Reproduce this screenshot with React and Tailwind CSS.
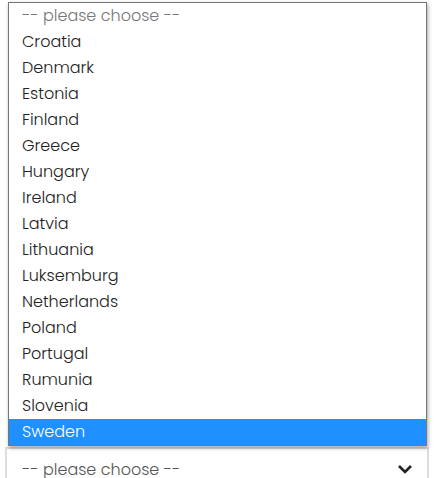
import React from 'react';

const countries = [
    'Croatia', 'Denmark', 'Estonia', 'Finland', 'Greece', 'Hungary', 'Ireland', 'Latvia',
    'Lithuania', 'Luksemburg', 'Netherlands', 'Poland', 'Portugal', 'Rumunia', 'Slovenia', 'Sweden',
];

const App = () => {
    const selected = 'Sweden';

    return (
        <div className="relative h-[478px] w-[434px] overflow-hidden bg-white text-[16px] font-light text-[#222] font-['Poppins','Open_Sans',sans-serif]">
            {/* field label partly hidden under the open list */}
            <div className="mt-[-15px] pl-[22px] leading-[20px] text-[#333]">Global</div>

            <div className="mt-[442px] mx-[5px] h-[40px] border-2 border-[#dddddd] flex items-center justify-between pl-[15px] pr-[14px]">
                <span className="text-[#555] pt-[5px]">-- please choose --</span>
                <svg width="16" height="10" viewBox="0 0 16 10" className="mt-[4px]">
                    <path d="M2 2 L8 8 L14 2" fill="none" stroke="#222" strokeWidth="2.6" />
                </svg>
            </div>

            {/* open native-style option list */}
            <div className="absolute left-[8px] top-[2px] w-[419px] bg-white border border-[#767676] shadow-[1px_2px_4px_rgba(0,0,0,0.35)] flex flex-col">
                <div className="h-[26px] leading-[26px] pl-[13px] text-[#777]">-- please choose --</div>
                {countries.map((c) => (
                    <div
                        key={c}
                        className={`h-[26px] leading-[26px] pl-[13px] ${c === selected ? 'bg-[#1e90ff] text-white' : 'text-[#222]'}`}
                    >
                        {c}
                    </div>
                ))}
            </div>
        </div>
    );
};

export default App;
